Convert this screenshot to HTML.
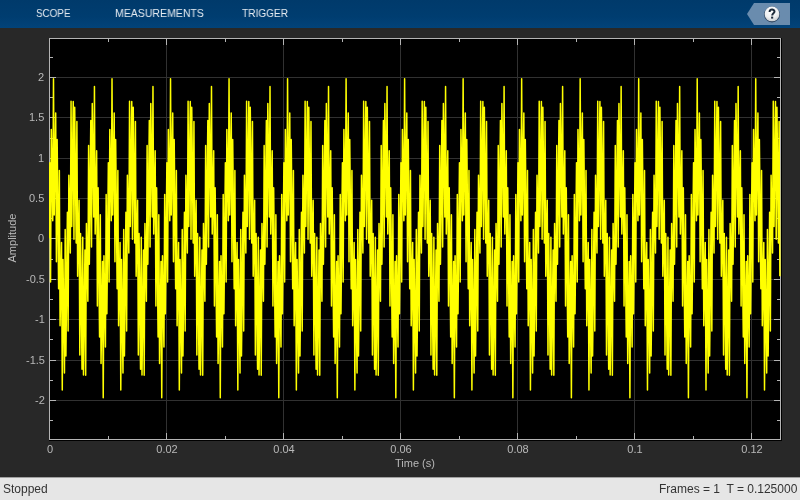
<!DOCTYPE html>
<html><head><meta charset="utf-8"><style>
html,body{margin:0;padding:0;}
body{-webkit-font-smoothing:antialiased;width:800px;height:500px;overflow:hidden;background:#282828;position:relative;font-family:"Liberation Sans",sans-serif;}
#tb{position:absolute;left:0;top:0;width:800px;height:28px;background:linear-gradient(#003a6b,#003d70 60%,#02437a);}
.tab{will-change:transform;position:absolute;top:7px;color:#e6ecf2;font-size:11px;line-height:13px;white-space:nowrap;transform-origin:0 0;}
#status{position:absolute;left:0;top:477px;width:800px;height:22px;background:#e6e6e6;border-top:1px solid #a0a0a0;}
.st{will-change:transform;position:absolute;top:4px;color:#333;font-size:12px;line-height:14px;white-space:nowrap;}
.lbl{will-change:transform;position:absolute;color:#b8b8b8;font-size:11px;line-height:12px;white-space:nowrap;}
.yl{right:755.5px;text-align:right;}
.xl{top:443px;width:60px;text-align:center;}
svg{position:absolute;left:0;top:0;}
</style></head><body>
<div id="tb">
<div class="tab" style="left:36px;transform:scaleX(0.895)">SCOPE</div>
<div class="tab" style="left:115px;transform:scaleX(0.957)">MEASUREMENTS</div>
<div class="tab" style="left:242px;transform:scaleX(0.918)">TRIGGER</div>
</div>
<svg width="800" height="500" viewBox="0 0 800 500">
<defs>
<clipPath id="cp"><rect x="49" y="38" width="732" height="402"/></clipPath>
<radialGradient id="hg" cx="0.45" cy="0.3" r="0.75">
<stop offset="0" stop-color="#ffffff"/><stop offset="0.6" stop-color="#eef0f2"/><stop offset="1" stop-color="#c4c8cc"/>
</radialGradient>
</defs>
<polygon points="747,14 754,3 790,3 790,25 754,25" fill="#6a8cae"/>
<circle cx="772" cy="14.5" r="7.9" fill="#2e4560"/>
<circle cx="772" cy="13.9" r="7.4" fill="url(#hg)"/>
<path d="M769.6,11.9 C769.6,8.9 774.5,8.9 774.5,11.6 C774.5,13.3 772.2,13.3 772.2,15.4" fill="none" stroke="#1c2a3a" stroke-width="2"/>
<rect x="771.1" y="16.6" width="2.1" height="2" fill="#1c2a3a"/>
<rect x="49" y="38" width="733" height="403" fill="#000"/>
<g stroke="#313131" stroke-width="1"><line x1="166.5" y1="39" x2="166.5" y2="439"/>
<line x1="283.5" y1="39" x2="283.5" y2="439"/>
<line x1="400.5" y1="39" x2="400.5" y2="439"/>
<line x1="517.5" y1="39" x2="517.5" y2="439"/>
<line x1="634.5" y1="39" x2="634.5" y2="439"/>
<line x1="751.5" y1="39" x2="751.5" y2="439"/>
<line x1="50" y1="77.5" x2="780" y2="77.5"/>
<line x1="50" y1="117.5" x2="780" y2="117.5"/>
<line x1="50" y1="158.5" x2="780" y2="158.5"/>
<line x1="50" y1="198.5" x2="780" y2="198.5"/>
<line x1="50" y1="238.5" x2="780" y2="238.5"/>
<line x1="50" y1="279.5" x2="780" y2="279.5"/>
<line x1="50" y1="319.5" x2="780" y2="319.5"/>
<line x1="50" y1="360.5" x2="780" y2="360.5"/>
<line x1="50" y1="400.5" x2="780" y2="400.5"/></g>
<rect x="49.5" y="38.5" width="731" height="401" fill="none" stroke="#b4b4b4" stroke-width="1"/>
<g stroke="#b4b4b4" stroke-width="1"><line x1="49.5" y1="39" x2="49.5" y2="45"/>
<line x1="49.5" y1="433" x2="49.5" y2="439"/>
<line x1="166.5" y1="39" x2="166.5" y2="45"/>
<line x1="166.5" y1="433" x2="166.5" y2="439"/>
<line x1="283.5" y1="39" x2="283.5" y2="45"/>
<line x1="283.5" y1="433" x2="283.5" y2="439"/>
<line x1="400.5" y1="39" x2="400.5" y2="45"/>
<line x1="400.5" y1="433" x2="400.5" y2="439"/>
<line x1="517.5" y1="39" x2="517.5" y2="45"/>
<line x1="517.5" y1="433" x2="517.5" y2="439"/>
<line x1="634.5" y1="39" x2="634.5" y2="45"/>
<line x1="634.5" y1="433" x2="634.5" y2="439"/>
<line x1="751.5" y1="39" x2="751.5" y2="45"/>
<line x1="751.5" y1="433" x2="751.5" y2="439"/>
<line x1="108.5" y1="39" x2="108.5" y2="42"/>
<line x1="108.5" y1="436" x2="108.5" y2="439"/>
<line x1="225.5" y1="39" x2="225.5" y2="42"/>
<line x1="225.5" y1="436" x2="225.5" y2="439"/>
<line x1="342.5" y1="39" x2="342.5" y2="42"/>
<line x1="342.5" y1="436" x2="342.5" y2="439"/>
<line x1="459.5" y1="39" x2="459.5" y2="42"/>
<line x1="459.5" y1="436" x2="459.5" y2="439"/>
<line x1="576.5" y1="39" x2="576.5" y2="42"/>
<line x1="576.5" y1="436" x2="576.5" y2="439"/>
<line x1="693.5" y1="39" x2="693.5" y2="42"/>
<line x1="693.5" y1="436" x2="693.5" y2="439"/>
<line x1="50" y1="77.5" x2="56" y2="77.5"/>
<line x1="774" y1="77.5" x2="780" y2="77.5"/>
<line x1="50" y1="117.5" x2="56" y2="117.5"/>
<line x1="774" y1="117.5" x2="780" y2="117.5"/>
<line x1="50" y1="158.5" x2="56" y2="158.5"/>
<line x1="774" y1="158.5" x2="780" y2="158.5"/>
<line x1="50" y1="198.5" x2="56" y2="198.5"/>
<line x1="774" y1="198.5" x2="780" y2="198.5"/>
<line x1="50" y1="238.5" x2="56" y2="238.5"/>
<line x1="774" y1="238.5" x2="780" y2="238.5"/>
<line x1="50" y1="279.5" x2="56" y2="279.5"/>
<line x1="774" y1="279.5" x2="780" y2="279.5"/>
<line x1="50" y1="319.5" x2="56" y2="319.5"/>
<line x1="774" y1="319.5" x2="780" y2="319.5"/>
<line x1="50" y1="360.5" x2="56" y2="360.5"/>
<line x1="774" y1="360.5" x2="780" y2="360.5"/>
<line x1="50" y1="400.5" x2="56" y2="400.5"/>
<line x1="774" y1="400.5" x2="780" y2="400.5"/>
<line x1="50" y1="57.5" x2="53" y2="57.5"/>
<line x1="777" y1="57.5" x2="780" y2="57.5"/>
<line x1="50" y1="97.5" x2="53" y2="97.5"/>
<line x1="777" y1="97.5" x2="780" y2="97.5"/>
<line x1="50" y1="138.5" x2="53" y2="138.5"/>
<line x1="777" y1="138.5" x2="780" y2="138.5"/>
<line x1="50" y1="178.5" x2="53" y2="178.5"/>
<line x1="777" y1="178.5" x2="780" y2="178.5"/>
<line x1="50" y1="218.5" x2="53" y2="218.5"/>
<line x1="777" y1="218.5" x2="780" y2="218.5"/>
<line x1="50" y1="259.5" x2="53" y2="259.5"/>
<line x1="777" y1="259.5" x2="780" y2="259.5"/>
<line x1="50" y1="299.5" x2="53" y2="299.5"/>
<line x1="777" y1="299.5" x2="780" y2="299.5"/>
<line x1="50" y1="339.5" x2="53" y2="339.5"/>
<line x1="777" y1="339.5" x2="780" y2="339.5"/>
<line x1="50" y1="380.5" x2="53" y2="380.5"/>
<line x1="777" y1="380.5" x2="780" y2="380.5"/>
<line x1="50" y1="420.5" x2="53" y2="420.5"/>
<line x1="777" y1="420.5" x2="780" y2="420.5"/></g>
<polyline clip-path="url(#cp)" fill="none" stroke="#ffff00" stroke-width="1.5" stroke-linejoin="round" points="49.10,238.25 49.83,162.77 50.56,282.07 51.29,129.39 52.03,173.33 52.76,220.85 53.49,78.74 54.22,214.99 54.95,161.93 55.68,113.08 56.41,261.75 57.15,139.57 57.88,213.45 58.61,288.70 59.34,170.55 60.07,325.71 60.80,285.42 61.54,242.53 62.27,390.00 63.00,259.54 63.73,318.50 64.46,373.03 65.19,229.50 65.92,356.02 66.66,285.42 67.39,212.22 68.12,331.05 68.85,175.21 69.58,213.45 70.31,253.06 71.05,101.25 71.78,226.57 72.51,161.93 73.24,101.50 73.97,239.24 74.70,107.36 75.43,173.33 76.17,242.88 76.90,121.57 77.63,276.26 78.36,238.25 79.09,200.24 79.82,354.93 80.55,233.62 81.29,303.17 82.02,369.14 82.75,237.26 83.48,375.00 84.21,314.57 84.94,249.93 85.68,375.25 86.41,223.44 87.14,263.05 87.87,301.29 88.60,145.45 89.33,264.28 90.06,191.08 90.80,120.48 91.53,247.00 92.26,103.47 92.99,158.00 93.72,216.96 94.45,86.50 95.18,233.97 95.92,191.08 96.65,150.79 97.38,305.95 98.11,187.80 98.84,263.05 99.57,336.93 100.31,214.75 101.04,363.42 101.77,314.57 102.50,261.51 103.23,397.76 103.96,255.65 104.69,303.17 105.43,347.11 106.16,194.43 106.89,313.73 107.62,238.25 108.35,162.77 109.08,282.07 109.81,129.39 110.55,173.33 111.28,220.85 112.01,78.74 112.74,214.99 113.47,161.93 114.20,113.08 114.94,261.75 115.67,139.57 116.40,213.45 117.13,288.70 117.86,170.55 118.59,325.71 119.32,285.42 120.06,242.53 120.79,390.00 121.52,259.54 122.25,318.50 122.98,373.03 123.71,229.50 124.44,356.02 125.18,285.42 125.91,212.22 126.64,331.05 127.37,175.21 128.10,213.45 128.83,253.06 129.56,101.25 130.30,226.57 131.03,161.93 131.76,101.50 132.49,239.24 133.22,107.36 133.95,173.33 134.69,242.88 135.42,121.57 136.15,276.26 136.88,238.25 137.61,200.24 138.34,354.93 139.07,233.62 139.81,303.17 140.54,369.14 141.27,237.26 142.00,375.00 142.73,314.57 143.46,249.93 144.19,375.25 144.93,223.44 145.66,263.05 146.39,301.29 147.12,145.45 147.85,264.28 148.58,191.08 149.32,120.48 150.05,247.00 150.78,103.47 151.51,158.00 152.24,216.96 152.97,86.50 153.70,233.97 154.44,191.08 155.17,150.79 155.90,305.95 156.63,187.80 157.36,263.05 158.09,336.93 158.82,214.75 159.56,363.42 160.29,314.57 161.02,261.51 161.75,397.76 162.48,255.65 163.21,303.17 163.95,347.11 164.68,194.43 165.41,313.73 166.14,238.25 166.87,162.77 167.60,282.07 168.33,129.39 169.07,173.33 169.80,220.85 170.53,78.74 171.26,214.99 171.99,161.93 172.72,113.08 173.46,261.75 174.19,139.57 174.92,213.45 175.65,288.70 176.38,170.55 177.11,325.71 177.84,285.42 178.58,242.53 179.31,390.00 180.04,259.54 180.77,318.50 181.50,373.03 182.23,229.50 182.96,356.02 183.70,285.42 184.43,212.22 185.16,331.05 185.89,175.21 186.62,213.45 187.35,253.06 188.09,101.25 188.82,226.57 189.55,161.93 190.28,101.50 191.01,239.24 191.74,107.36 192.47,173.33 193.21,242.88 193.94,121.57 194.67,276.26 195.40,238.25 196.13,200.24 196.86,354.93 197.59,233.62 198.33,303.17 199.06,369.14 199.79,237.26 200.52,375.00 201.25,314.57 201.98,249.93 202.71,375.25 203.45,223.44 204.18,263.05 204.91,301.29 205.64,145.45 206.37,264.28 207.10,191.08 207.84,120.48 208.57,247.00 209.30,103.47 210.03,158.00 210.76,216.96 211.49,86.50 212.22,233.97 212.96,191.08 213.69,150.79 214.42,305.95 215.15,187.80 215.88,263.05 216.61,336.93 217.34,214.75 218.08,363.42 218.81,314.57 219.54,261.51 220.27,397.76 221.00,255.65 221.73,303.17 222.47,347.11 223.20,194.43 223.93,313.73 224.66,238.25 225.39,162.77 226.12,282.07 226.85,129.39 227.59,173.33 228.32,220.85 229.05,78.74 229.78,214.99 230.51,161.93 231.24,113.08 231.97,261.75 232.71,139.57 233.44,213.45 234.17,288.70 234.90,170.55 235.63,325.71 236.36,285.42 237.10,242.53 237.83,390.00 238.56,259.54 239.29,318.50 240.02,373.03 240.75,229.50 241.48,356.02 242.22,285.42 242.95,212.22 243.68,331.05 244.41,175.21 245.14,213.45 245.87,253.06 246.61,101.25 247.34,226.57 248.07,161.93 248.80,101.50 249.53,239.24 250.26,107.36 250.99,173.33 251.73,242.88 252.46,121.57 253.19,276.26 253.92,238.25 254.65,200.24 255.38,354.93 256.11,233.62 256.85,303.17 257.58,369.14 258.31,237.26 259.04,375.00 259.77,314.57 260.50,249.93 261.24,375.25 261.97,223.44 262.70,263.05 263.43,301.29 264.16,145.45 264.89,264.28 265.62,191.08 266.36,120.48 267.09,247.00 267.82,103.47 268.55,158.00 269.28,216.96 270.01,86.50 270.74,233.97 271.48,191.08 272.21,150.79 272.94,305.95 273.67,187.80 274.40,263.05 275.13,336.93 275.87,214.75 276.60,363.42 277.33,314.57 278.06,261.51 278.79,397.76 279.52,255.65 280.25,303.17 280.99,347.11 281.72,194.43 282.45,313.73 283.18,238.25 283.91,162.77 284.64,282.07 285.37,129.39 286.11,173.33 286.84,220.85 287.57,78.74 288.30,214.99 289.03,161.93 289.76,113.08 290.50,261.75 291.23,139.57 291.96,213.45 292.69,288.70 293.42,170.55 294.15,325.71 294.88,285.42 295.62,242.53 296.35,390.00 297.08,259.54 297.81,318.50 298.54,373.03 299.27,229.50 300.00,356.02 300.74,285.42 301.47,212.22 302.20,331.05 302.93,175.21 303.66,213.45 304.39,253.06 305.12,101.25 305.86,226.57 306.59,161.93 307.32,101.50 308.05,239.24 308.78,107.36 309.51,173.33 310.25,242.88 310.98,121.57 311.71,276.26 312.44,238.25 313.17,200.24 313.90,354.93 314.63,233.62 315.37,303.17 316.10,369.14 316.83,237.26 317.56,375.00 318.29,314.57 319.02,249.93 319.75,375.25 320.49,223.44 321.22,263.05 321.95,301.29 322.68,145.45 323.41,264.28 324.14,191.08 324.88,120.48 325.61,247.00 326.34,103.47 327.07,158.00 327.80,216.96 328.53,86.50 329.26,233.97 330.00,191.08 330.73,150.79 331.46,305.95 332.19,187.80 332.92,263.05 333.65,336.93 334.39,214.75 335.12,363.42 335.85,314.57 336.58,261.51 337.31,397.76 338.04,255.65 338.77,303.17 339.51,347.11 340.24,194.43 340.97,313.73 341.70,238.25 342.43,162.77 343.16,282.07 343.89,129.39 344.63,173.33 345.36,220.85 346.09,78.74 346.82,214.99 347.55,161.93 348.28,113.08 349.01,261.75 349.75,139.57 350.48,213.45 351.21,288.70 351.94,170.55 352.67,325.71 353.40,285.42 354.14,242.53 354.87,390.00 355.60,259.54 356.33,318.50 357.06,373.03 357.79,229.50 358.52,356.02 359.26,285.42 359.99,212.22 360.72,331.05 361.45,175.21 362.18,213.45 362.91,253.06 363.65,101.25 364.38,226.57 365.11,161.93 365.84,101.50 366.57,239.24 367.30,107.36 368.03,173.33 368.77,242.88 369.50,121.57 370.23,276.26 370.96,238.25 371.69,200.24 372.42,354.93 373.15,233.62 373.89,303.17 374.62,369.14 375.35,237.26 376.08,375.00 376.81,314.57 377.54,249.93 378.28,375.25 379.01,223.44 379.74,263.05 380.47,301.29 381.20,145.45 381.93,264.28 382.66,191.08 383.40,120.48 384.13,247.00 384.86,103.47 385.59,158.00 386.32,216.96 387.05,86.50 387.78,233.97 388.52,191.08 389.25,150.79 389.98,305.95 390.71,187.80 391.44,263.05 392.17,336.93 392.91,214.75 393.64,363.42 394.37,314.57 395.10,261.51 395.83,397.76 396.56,255.65 397.29,303.17 398.03,347.11 398.76,194.43 399.49,313.73 400.22,238.25 400.95,162.77 401.68,282.07 402.41,129.39 403.15,173.33 403.88,220.85 404.61,78.74 405.34,214.99 406.07,161.93 406.80,113.08 407.54,261.75 408.27,139.57 409.00,213.45 409.73,288.70 410.46,170.55 411.19,325.71 411.92,285.42 412.66,242.53 413.39,390.00 414.12,259.54 414.85,318.50 415.58,373.03 416.31,229.50 417.04,356.02 417.78,285.42 418.51,212.22 419.24,331.05 419.97,175.21 420.70,213.45 421.43,253.06 422.17,101.25 422.90,226.57 423.63,161.93 424.36,101.50 425.09,239.24 425.82,107.36 426.55,173.33 427.29,242.88 428.02,121.57 428.75,276.26 429.48,238.25 430.21,200.24 430.94,354.93 431.67,233.62 432.41,303.17 433.14,369.14 433.87,237.26 434.60,375.00 435.33,314.57 436.06,249.93 436.80,375.25 437.53,223.44 438.26,263.05 438.99,301.29 439.72,145.45 440.45,264.28 441.18,191.08 441.92,120.48 442.65,247.00 443.38,103.47 444.11,158.00 444.84,216.96 445.57,86.50 446.30,233.97 447.04,191.08 447.77,150.79 448.50,305.95 449.23,187.80 449.96,263.05 450.69,336.93 451.43,214.75 452.16,363.42 452.89,314.57 453.62,261.51 454.35,397.76 455.08,255.65 455.81,303.17 456.55,347.11 457.28,194.43 458.01,313.73 458.74,238.25 459.47,162.77 460.20,282.07 460.93,129.39 461.67,173.33 462.40,220.85 463.13,78.74 463.86,214.99 464.59,161.93 465.32,113.08 466.06,261.75 466.79,139.57 467.52,213.45 468.25,288.70 468.98,170.55 469.71,325.71 470.44,285.42 471.18,242.53 471.91,390.00 472.64,259.54 473.37,318.50 474.10,373.03 474.83,229.50 475.56,356.02 476.30,285.42 477.03,212.22 477.76,331.05 478.49,175.21 479.22,213.45 479.95,253.06 480.69,101.25 481.42,226.57 482.15,161.93 482.88,101.50 483.61,239.24 484.34,107.36 485.07,173.33 485.81,242.88 486.54,121.57 487.27,276.26 488.00,238.25 488.73,200.24 489.46,354.93 490.19,233.62 490.93,303.17 491.66,369.14 492.39,237.26 493.12,375.00 493.85,314.57 494.58,249.93 495.31,375.25 496.05,223.44 496.78,263.05 497.51,301.29 498.24,145.45 498.97,264.28 499.70,191.08 500.44,120.48 501.17,247.00 501.90,103.47 502.63,158.00 503.36,216.96 504.09,86.50 504.82,233.97 505.56,191.08 506.29,150.79 507.02,305.95 507.75,187.80 508.48,263.05 509.21,336.93 509.95,214.75 510.68,363.42 511.41,314.57 512.14,261.51 512.87,397.76 513.60,255.65 514.33,303.17 515.07,347.11 515.80,194.43 516.53,313.73 517.26,238.25 517.99,162.77 518.72,282.07 519.45,129.39 520.19,173.33 520.92,220.85 521.65,78.74 522.38,214.99 523.11,161.93 523.84,113.08 524.58,261.75 525.31,139.57 526.04,213.45 526.77,288.70 527.50,170.55 528.23,325.71 528.96,285.42 529.70,242.53 530.43,390.00 531.16,259.54 531.89,318.50 532.62,373.03 533.35,229.50 534.08,356.02 534.82,285.42 535.55,212.22 536.28,331.05 537.01,175.21 537.74,213.45 538.47,253.06 539.21,101.25 539.94,226.57 540.67,161.93 541.40,101.50 542.13,239.24 542.86,107.36 543.59,173.33 544.33,242.88 545.06,121.57 545.79,276.26 546.52,238.25 547.25,200.24 547.98,354.93 548.71,233.62 549.45,303.17 550.18,369.14 550.91,237.26 551.64,375.00 552.37,314.57 553.10,249.93 553.83,375.25 554.57,223.44 555.30,263.05 556.03,301.29 556.76,145.45 557.49,264.28 558.22,191.08 558.96,120.48 559.69,247.00 560.42,103.47 561.15,158.00 561.88,216.96 562.61,86.50 563.34,233.97 564.08,191.08 564.81,150.79 565.54,305.95 566.27,187.80 567.00,263.05 567.73,336.93 568.47,214.75 569.20,363.42 569.93,314.57 570.66,261.51 571.39,397.76 572.12,255.65 572.85,303.17 573.59,347.11 574.32,194.43 575.05,313.73 575.78,238.25 576.51,162.77 577.24,282.07 577.97,129.39 578.71,173.33 579.44,220.85 580.17,78.74 580.90,214.99 581.63,161.93 582.36,113.08 583.10,261.75 583.83,139.57 584.56,213.45 585.29,288.70 586.02,170.55 586.75,325.71 587.48,285.42 588.22,242.53 588.95,390.00 589.68,259.54 590.41,318.50 591.14,373.03 591.87,229.50 592.60,356.02 593.34,285.42 594.07,212.22 594.80,331.05 595.53,175.21 596.26,213.45 596.99,253.06 597.73,101.25 598.46,226.57 599.19,161.93 599.92,101.50 600.65,239.24 601.38,107.36 602.11,173.33 602.85,242.88 603.58,121.57 604.31,276.26 605.04,238.25 605.77,200.24 606.50,354.93 607.23,233.62 607.97,303.17 608.70,369.14 609.43,237.26 610.16,375.00 610.89,314.57 611.62,249.93 612.36,375.25 613.09,223.44 613.82,263.05 614.55,301.29 615.28,145.45 616.01,264.28 616.74,191.08 617.48,120.48 618.21,247.00 618.94,103.47 619.67,158.00 620.40,216.96 621.13,86.50 621.86,233.97 622.60,191.08 623.33,150.79 624.06,305.95 624.79,187.80 625.52,263.05 626.25,336.93 626.99,214.75 627.72,363.42 628.45,314.57 629.18,261.51 629.91,397.76 630.64,255.65 631.37,303.17 632.11,347.11 632.84,194.43 633.57,313.73 634.30,238.25 635.03,162.77 635.76,282.07 636.49,129.39 637.23,173.33 637.96,220.85 638.69,78.74 639.42,214.99 640.15,161.93 640.88,113.08 641.62,261.75 642.35,139.57 643.08,213.45 643.81,288.70 644.54,170.55 645.27,325.71 646.00,285.42 646.74,242.53 647.47,390.00 648.20,259.54 648.93,318.50 649.66,373.03 650.39,229.50 651.12,356.02 651.86,285.42 652.59,212.22 653.32,331.05 654.05,175.21 654.78,213.45 655.51,253.06 656.25,101.25 656.98,226.57 657.71,161.93 658.44,101.50 659.17,239.24 659.90,107.36 660.63,173.33 661.37,242.88 662.10,121.57 662.83,276.26 663.56,238.25 664.29,200.24 665.02,354.93 665.75,233.62 666.49,303.17 667.22,369.14 667.95,237.26 668.68,375.00 669.41,314.57 670.14,249.93 670.88,375.25 671.61,223.44 672.34,263.05 673.07,301.29 673.80,145.45 674.53,264.28 675.26,191.08 676.00,120.48 676.73,247.00 677.46,103.47 678.19,158.00 678.92,216.96 679.65,86.50 680.38,233.97 681.12,191.08 681.85,150.79 682.58,305.95 683.31,187.80 684.04,263.05 684.77,336.93 685.50,214.75 686.24,363.42 686.97,314.57 687.70,261.51 688.43,397.76 689.16,255.65 689.89,303.17 690.63,347.11 691.36,194.43 692.09,313.73 692.82,238.25 693.55,162.77 694.28,282.07 695.01,129.39 695.75,173.33 696.48,220.85 697.21,78.74 697.94,214.99 698.67,161.93 699.40,113.08 700.13,261.75 700.87,139.57 701.60,213.45 702.33,288.70 703.06,170.55 703.79,325.71 704.52,285.42 705.26,242.53 705.99,390.00 706.72,259.54 707.45,318.50 708.18,373.03 708.91,229.50 709.64,356.02 710.38,285.42 711.11,212.22 711.84,331.05 712.57,175.21 713.30,213.45 714.03,253.06 714.77,101.25 715.50,226.57 716.23,161.93 716.96,101.50 717.69,239.24 718.42,107.36 719.15,173.33 719.89,242.88 720.62,121.57 721.35,276.26 722.08,238.25 722.81,200.24 723.54,354.93 724.27,233.62 725.01,303.17 725.74,369.14 726.47,237.26 727.20,375.00 727.93,314.57 728.66,249.93 729.40,375.25 730.13,223.44 730.86,263.05 731.59,301.29 732.32,145.45 733.05,264.28 733.78,191.08 734.52,120.48 735.25,247.00 735.98,103.47 736.71,158.00 737.44,216.96 738.17,86.50 738.90,233.97 739.64,191.08 740.37,150.79 741.10,305.95 741.83,187.80 742.56,263.05 743.29,336.93 744.02,214.75 744.76,363.42 745.49,314.57 746.22,261.51 746.95,397.76 747.68,255.65 748.41,303.17 749.15,347.11 749.88,194.43 750.61,313.73 751.34,238.25 752.07,162.77 752.80,282.07 753.53,129.39 754.27,173.33 755.00,220.85 755.73,78.74 756.46,214.99 757.19,161.93 757.92,113.08 758.65,261.75 759.39,139.57 760.12,213.45 760.85,288.70 761.58,170.55 762.31,325.71 763.04,285.42 763.78,242.53 764.51,390.00 765.24,259.54 765.97,318.50 766.70,373.03 767.43,229.50 768.16,356.02 768.90,285.42 769.63,212.22 770.36,331.05 771.09,175.21 771.82,213.45 772.55,253.06 773.28,101.25 774.02,226.57 774.75,161.93 775.48,101.50 776.21,239.24 776.94,107.36 777.67,173.33 778.41,242.88 779.14,121.57 779.87,276.26"/>
</svg>
<div class="lbl yl" style="top:71px">2</div><div class="lbl yl" style="top:111px">1.5</div><div class="lbl yl" style="top:152px">1</div><div class="lbl yl" style="top:192px">0.5</div><div class="lbl yl" style="top:232px">0</div><div class="lbl yl" style="top:273px">-0.5</div><div class="lbl yl" style="top:313px">-1</div><div class="lbl yl" style="top:354px">-1.5</div><div class="lbl yl" style="top:394px">-2</div>
<div class="lbl xl" style="left:19.6px">0</div><div class="lbl xl" style="left:136.6px">0.02</div><div class="lbl xl" style="left:253.6px">0.04</div><div class="lbl xl" style="left:370.6px">0.06</div><div class="lbl xl" style="left:487.6px">0.08</div><div class="lbl xl" style="left:604.6px">0.1</div><div class="lbl xl" style="left:721.6px">0.12</div>
<div class="lbl" style="left:394.6px;top:457.3px">Time (s)</div>
<div class="lbl" style="left:-13px;top:232px;width:50px;text-align:center;transform:rotate(-90deg);">Amplitude</div>
<div id="status">
<div class="st" style="left:3.4px">Stopped</div>
<div class="st" style="right:3px">Frames = 1&nbsp; T = 0.125000</div>
</div>
</body></html>
